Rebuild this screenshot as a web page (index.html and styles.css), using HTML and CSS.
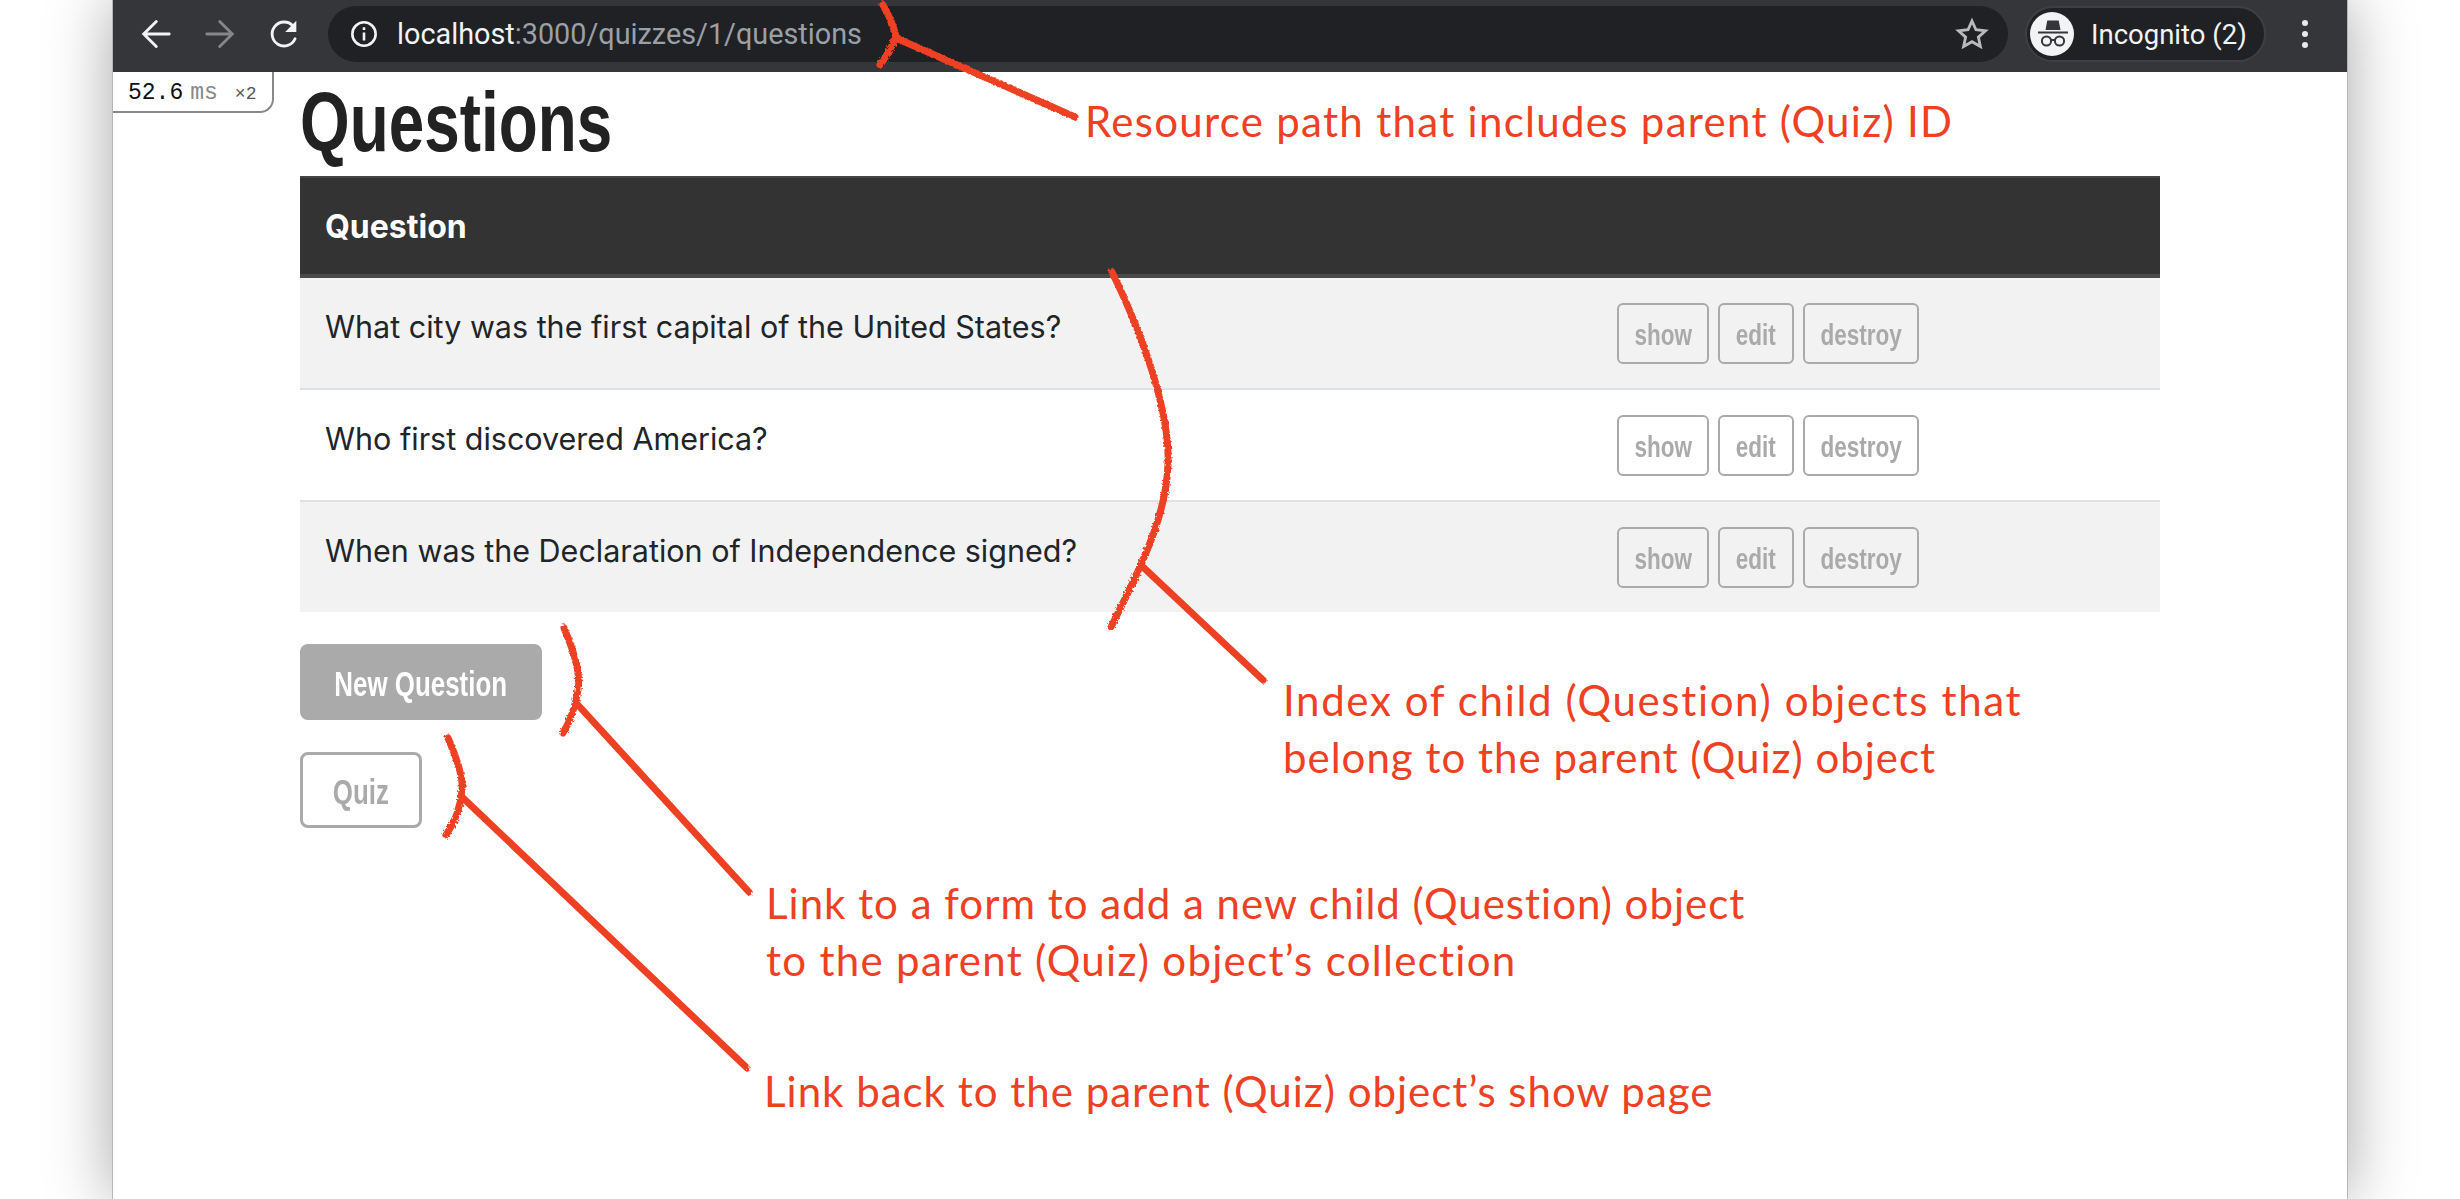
FILE: index.html
```html
<!DOCTYPE html>
<html lang="en">
<head>
  <meta charset="UTF-8">
  <title>Questions</title>
  <link rel="stylesheet" href="styles.css">
</head>
<body>
  <div class="window">
    <!-- Browser toolbar -->
    <div class="toolbar">
      <div class="nav-buttons">
        <svg class="nav-icon" viewBox="0 0 24 24"><path d="M20.8 12H3.8M12.2 3.6L3.8 12l8.4 8.4" /></svg>
        <svg class="nav-icon nav-off" viewBox="0 0 24 24"><path d="M3.2 12h17M11.8 3.6l8.4 8.4-8.4 8.4" /></svg>
        <svg class="nav-icon" viewBox="0 0 24 24"><path d="M19.4 15.2A8 8 0 1 1 18 6.6" /><path class="fill" d="M20.2 3.2v7.4h-7.4z" /></svg>
      </div>
      <div class="omnibox">
        <svg class="info-icon" viewBox="0 0 24 24"><circle cx="12" cy="12" r="10" /><path d="M12 10.8v6.8M12 6.2v2.4" /></svg>
        <span class="url"><span class="host">localhost</span>:3000/quizzes/1/questions</span>
        <svg class="star-icon" viewBox="0 0 24 24"><path d="M12 2.8l2.8 6.2 6.7.7-5 4.5 1.4 6.6-5.9-3.4-5.9 3.4 1.4-6.6-5-4.5 6.7-.7z" /></svg>
      </div>
      <div class="profile">
        <svg class="avatar" viewBox="0 0 44 44">
          <circle cx="22" cy="22" r="22" fill="#f1f3f4" />
          <path d="M15.5 18l1.8-9.5h11.4l1.8 9.5z" fill="#35363a" />
          <rect x="8" y="19.5" width="30" height="2" fill="#35363a" />
          <circle cx="16.5" cy="29" r="4.6" fill="none" stroke="#35363a" stroke-width="2" />
          <circle cx="29.5" cy="29" r="4.6" fill="none" stroke="#35363a" stroke-width="2" />
          <path d="M21 28h4" stroke="#35363a" stroke-width="2" />
        </svg>
        <span class="profile-name">Incognito (2)</span>
      </div>
      <div class="menu-dots"><i></i><i></i><i></i></div>
    </div>

    <!-- Page -->
    <div class="page">
      <div class="profiler"><b>52.6</b><span>ms</span><small>×2</small></div>
      <h1>Questions</h1>
      <table class="questions">
        <thead>
          <tr><th colspan="2">Question</th></tr>
        </thead>
        <tbody>
          <tr>
            <td>What city was the first capital of the United States?</td>
            <td class="actions">
              <div class="btn-group"><a class="btn btn-show"><span>show</span></a><a class="btn btn-edit"><span>edit</span></a><a class="btn btn-destroy"><span>destroy</span></a></div>
            </td>
          </tr>
          <tr>
            <td>Who first discovered America?</td>
            <td class="actions">
              <div class="btn-group"><a class="btn btn-show"><span>show</span></a><a class="btn btn-edit"><span>edit</span></a><a class="btn btn-destroy"><span>destroy</span></a></div>
            </td>
          </tr>
          <tr>
            <td>When was the Declaration of Independence signed?</td>
            <td class="actions">
              <div class="btn-group"><a class="btn btn-show"><span>show</span></a><a class="btn btn-edit"><span>edit</span></a><a class="btn btn-destroy"><span>destroy</span></a></div>
            </td>
          </tr>
        </tbody>
      </table>
      <div class="page-links">
        <a class="link-btn solid"><span>New Question</span></a>
        <a class="link-btn outline"><span>Quiz</span></a>
      </div>
    </div>
  </div>

  <!-- Hand drawn notes on top of the screenshot -->
  <svg class="strokes" viewBox="0 0 2460 1199">
    <defs>
      <filter id="rough" x="-5%" y="-5%" width="110%" height="110%">
        <feTurbulence type="fractalNoise" baseFrequency="0.4" numOctaves="2" seed="4" />
        <feDisplacementMap in="SourceGraphic" scale="4" />
      </filter>
    </defs>
    <g class="ink" filter="url(#rough)">
      <path d="M883 5Q892 20 896 36Q890 52 880 65" />
      <path d="M896 38L1075 117" />
      <path d="M1112 272C1150 350 1170 420 1168 465C1166 510 1150 550 1111 627" />
      <path d="M1143 567L1263 680" />
      <path d="M564 628Q582 670 578 690Q574 715 563 733" />
      <path d="M578 705L749 892" />
      <path d="M448 738Q464 775 462 790Q460 815 446 835" />
      <path d="M462 797L746 1067" />
    </g>
  </svg>
  <p class="note note-path">Resource path that includes parent (Quiz) ID</p>
  <p class="note note-index">Index of child (Question) objects that<br><span class="tight">belong to the parent (Quiz) object</span></p>
  <p class="note note-new"><span class="tight">Link to a form to add a new child (Question) object</span><br>to the parent (Quiz) object’s collection</p>
  <p class="note note-back">Link back to the parent (Quiz) object’s show page</p>
</body>
</html>
```

FILE: styles.css
```css
/* General Styles */
html, body {
  margin: 0;
  height: 100%;
  overflow: hidden;
  background: #fff;
}

.window {
  position: relative;
  margin: 0 112px;
  height: 1199px;
  background: #fff;
  box-shadow: 0 0 60px rgba(0, 0, 0, 0.35);
  border-left: 1px solid #b5b5b5;
  border-right: 1px solid #b5b5b5;
  box-sizing: border-box;
}

/* Browser toolbar */
.toolbar {
  display: flex;
  align-items: center;
  height: 72px;
  box-sizing: border-box;
  background: #35363a;
  padding: 0 0 4px 25px;
  font-family: Roboto, sans-serif;
}

.nav-buttons {
  display: flex;
  gap: 28px;
  width: 190px;
}

.nav-icon {
  width: 36px;
  height: 36px;
  fill: none;
  stroke: #f1f3f4;
  stroke-width: 1.9;
  stroke-linecap: round;
}

.nav-icon .fill {
  fill: #f1f3f4;
  stroke: none;
}

.nav-off {
  stroke: #85868a;
}

.omnibox {
  display: flex;
  align-items: center;
  width: 1680px;
  height: 56px;
  box-sizing: border-box;
  padding: 0 19px 0 22px;
  background: #202124;
  border-radius: 28px;
  color: #9aa0a6;
}

.info-icon {
  width: 28px;
  height: 28px;
  fill: none;
  stroke: #f1f3f4;
  stroke-width: 2.2;
}

.url {
  flex: 1;
  margin-left: 19px;
  font-size: 28.8px;
}

.host {
  color: #f1f3f4;
}

.star-icon {
  width: 34px;
  height: 34px;
  fill: none;
  stroke: #b9babc;
  stroke-width: 2;
}

.profile {
  display: flex;
  align-items: center;
  width: 241px;
  height: 56px;
  box-sizing: border-box;
  margin-left: 17px;
  padding-left: 3px;
  background: #202124;
  border: 2px solid #3e3f44;
  border-radius: 28px;
}

.avatar {
  width: 44px;
  height: 44px;
}

.profile-name {
  margin-left: 17px;
  font-size: 27.5px;
  color: #f1f3f4;
}

.menu-dots {
  display: flex;
  flex-direction: column;
  gap: 5px;
  margin-left: 36px;
}

.menu-dots i {
  display: block;
  width: 6px;
  height: 6px;
  border-radius: 50%;
  background: #e8eaed;
}

/* Page */
.page {
  position: relative;
  padding-left: 187px;
}

.profiler {
  position: absolute;
  top: 0;
  left: 0;
  display: flex;
  align-items: baseline;
  width: 161px;
  height: 41px;
  box-sizing: border-box;
  padding: 8px 0 0 15px;
  background: #fff;
  border-right: 2px solid #888;
  border-bottom: 2px solid #888;
  border-bottom-right-radius: 14px;
  font-family: "Liberation Mono", monospace;
  font-size: 23px;
  line-height: 26px;
  color: #111;
}

.profiler b {
  font-weight: normal;
}

.profiler span {
  margin-left: 7px;
  color: #888;
}

.profiler small {
  margin-left: 17px;
  font-size: 18px;
  color: #555;
}

h1 {
  margin: 0;
  height: 104px;
  font-family: "Liberation Sans", sans-serif;
  font-size: 84px;
  font-weight: bold;
  line-height: 100px;
  color: #222;
  transform: scaleX(0.76);
  transform-origin: left;
}

/* Questions table */
.questions {
  width: 1860px;
  border-collapse: separate;
  border-spacing: 0;
  font-family: Inter, sans-serif;
  font-size: 30.5px;
  color: #212529;
}

.questions th {
  height: 102px;
  box-sizing: border-box;
  padding: 0 25px;
  background: #333;
  border-top: 2px solid #444;
  border-bottom: 4px solid #4a4a4a;
  color: #fff;
  font-size: 32px;
  font-weight: bold;
  text-align: left;
}

.questions td {
  height: 112px;
  padding: 0 25px 13px;
  box-sizing: border-box;
  border-bottom: 2px solid #dee2e6;
}

.questions tbody tr:nth-child(odd) {
  background: #f2f2f2;
}

.questions tbody tr:last-child td {
  height: 110px;
  border-bottom: 0;
}

.questions .actions {
  width: 568px;
  padding-bottom: 0;
}

.btn-group {
  display: flex;
  gap: 9px;
}

.btn {
  display: flex;
  align-items: center;
  justify-content: center;
  height: 61px;
  box-sizing: border-box;
  padding-top: 4px;
  border: 2px solid #aaa;
  border-radius: 6px;
  font-family: "Liberation Sans", sans-serif;
  font-size: 30px;
  font-weight: bold;
  color: #aaa;
}

.btn span {
  transform: scaleX(0.75);
}

.btn-show {
  width: 92px;
}

.btn-edit {
  width: 76px;
}

.btn-destroy {
  width: 116px;
}

/* Links below the table */
.page-links {
  display: flex;
  flex-direction: column;
  align-items: flex-start;
  gap: 32px;
  margin-top: 32px;
}

.link-btn {
  display: flex;
  align-items: center;
  justify-content: center;
  height: 76px;
  box-sizing: border-box;
  padding-top: 3px;
  border-radius: 8px;
  font-family: "Liberation Sans", sans-serif;
  font-size: 35px;
  font-weight: bold;
}

.link-btn span {
  transform: scaleX(0.74);
  white-space: nowrap;
}

.solid {
  width: 242px;
  background: #aaa;
  color: #fff;
}

.outline {
  width: 122px;
  border: 3px solid #aaa;
  color: #aaa;
}

/* Annotations */
.strokes {
  position: absolute;
  top: 0;
  left: 0;
  width: 2460px;
  height: 1199px;
}

.ink path {
  fill: none;
  stroke: #ee4023;
  stroke-width: 7;
  stroke-linecap: round;
}

.note {
  position: absolute;
  margin: 0;
  font-family: "Comic Sans MS", Lato, sans-serif;
  font-size: 42px;
  letter-spacing: 1.3px;
  line-height: 57px;
  color: #ee4023;
  white-space: nowrap;
}

.note .tight {
  letter-spacing: 1px;
}

.note-path {
  left: 1085px;
  top: 93px;
}

.note-index {
  left: 1283px;
  top: 672px;
  letter-spacing: 1.65px;
}

.note-new {
  left: 766px;
  top: 875px;
}

.note-back {
  left: 764px;
  top: 1063px;
  letter-spacing: 1px;
}
```
